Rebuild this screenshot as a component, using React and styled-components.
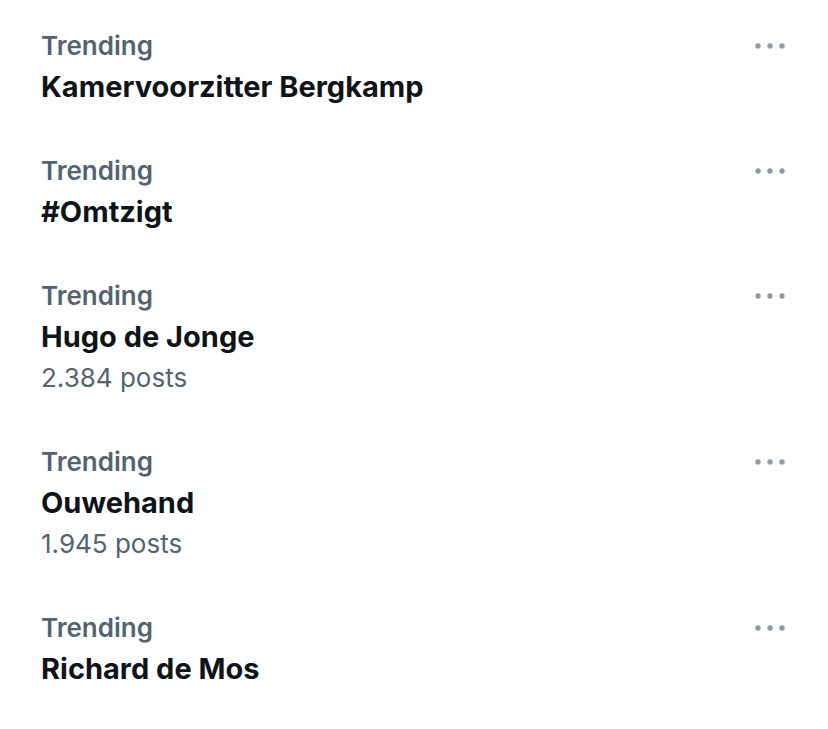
import React from "react";
import styled, { createGlobalStyle } from "styled-components";

const Global = createGlobalStyle`
  html, body { margin: 0; padding: 0; background: #ffffff; }
  body { font-family: Inter, "Noto Sans", "Liberation Sans", sans-serif; -webkit-font-smoothing: antialiased; }
`;

const List = styled.div`
  display: flex;
  flex-direction: column;
  padding-top: 6px;
`;

const Item = styled.div`
  display: flex;
  justify-content: space-between;
  align-items: flex-start;
  padding: 23px 42px 24px 41px;
`;

const Texts = styled.div`
  display: flex;
  flex-direction: column;
`;

const Label = styled.div`
  font-size: 26px;
  line-height: 33px;
  font-weight: 600;
  color: #536471;
`;

const Title = styled.div`
  margin-top: 4px;
  font-size: 29px;
  line-height: 41px;
  font-weight: 700;
  color: #0f1419;
`;

const Count = styled.div`
  font-size: 26px;
  line-height: 41px;
  font-weight: 400;
  color: #536471;
`;

const More = styled.div`
  display: flex;
  align-items: center;
  height: 33px;
  color: #8f9ba6;
`;

const Dots = () => (
  <svg width="32" height="8" viewBox="0 0 32 8">
    <circle cx="4" cy="4" r="2.7" fill="currentColor" />
    <circle cx="16" cy="4" r="2.7" fill="currentColor" />
    <circle cx="28" cy="4" r="2.7" fill="currentColor" />
  </svg>
);

const trends = [
  { title: "Kamervoorzitter Bergkamp" },
  { title: "#Omtzigt" },
  { title: "Hugo de Jonge", count: "2.384 posts" },
  { title: "Ouwehand", count: "1.945 posts" },
  { title: "Richard de Mos" },
];

export default function App() {
  return (
    <>
      <Global />
      <List>
        {trends.map((t) => (
          <Item key={t.title}>
            <Texts>
              <Label>Trending</Label>
              <Title>{t.title}</Title>
              {t.count && <Count>{t.count}</Count>}
            </Texts>
            <More>
              <Dots />
            </More>
          </Item>
        ))}
      </List>
    </>
  );
}
